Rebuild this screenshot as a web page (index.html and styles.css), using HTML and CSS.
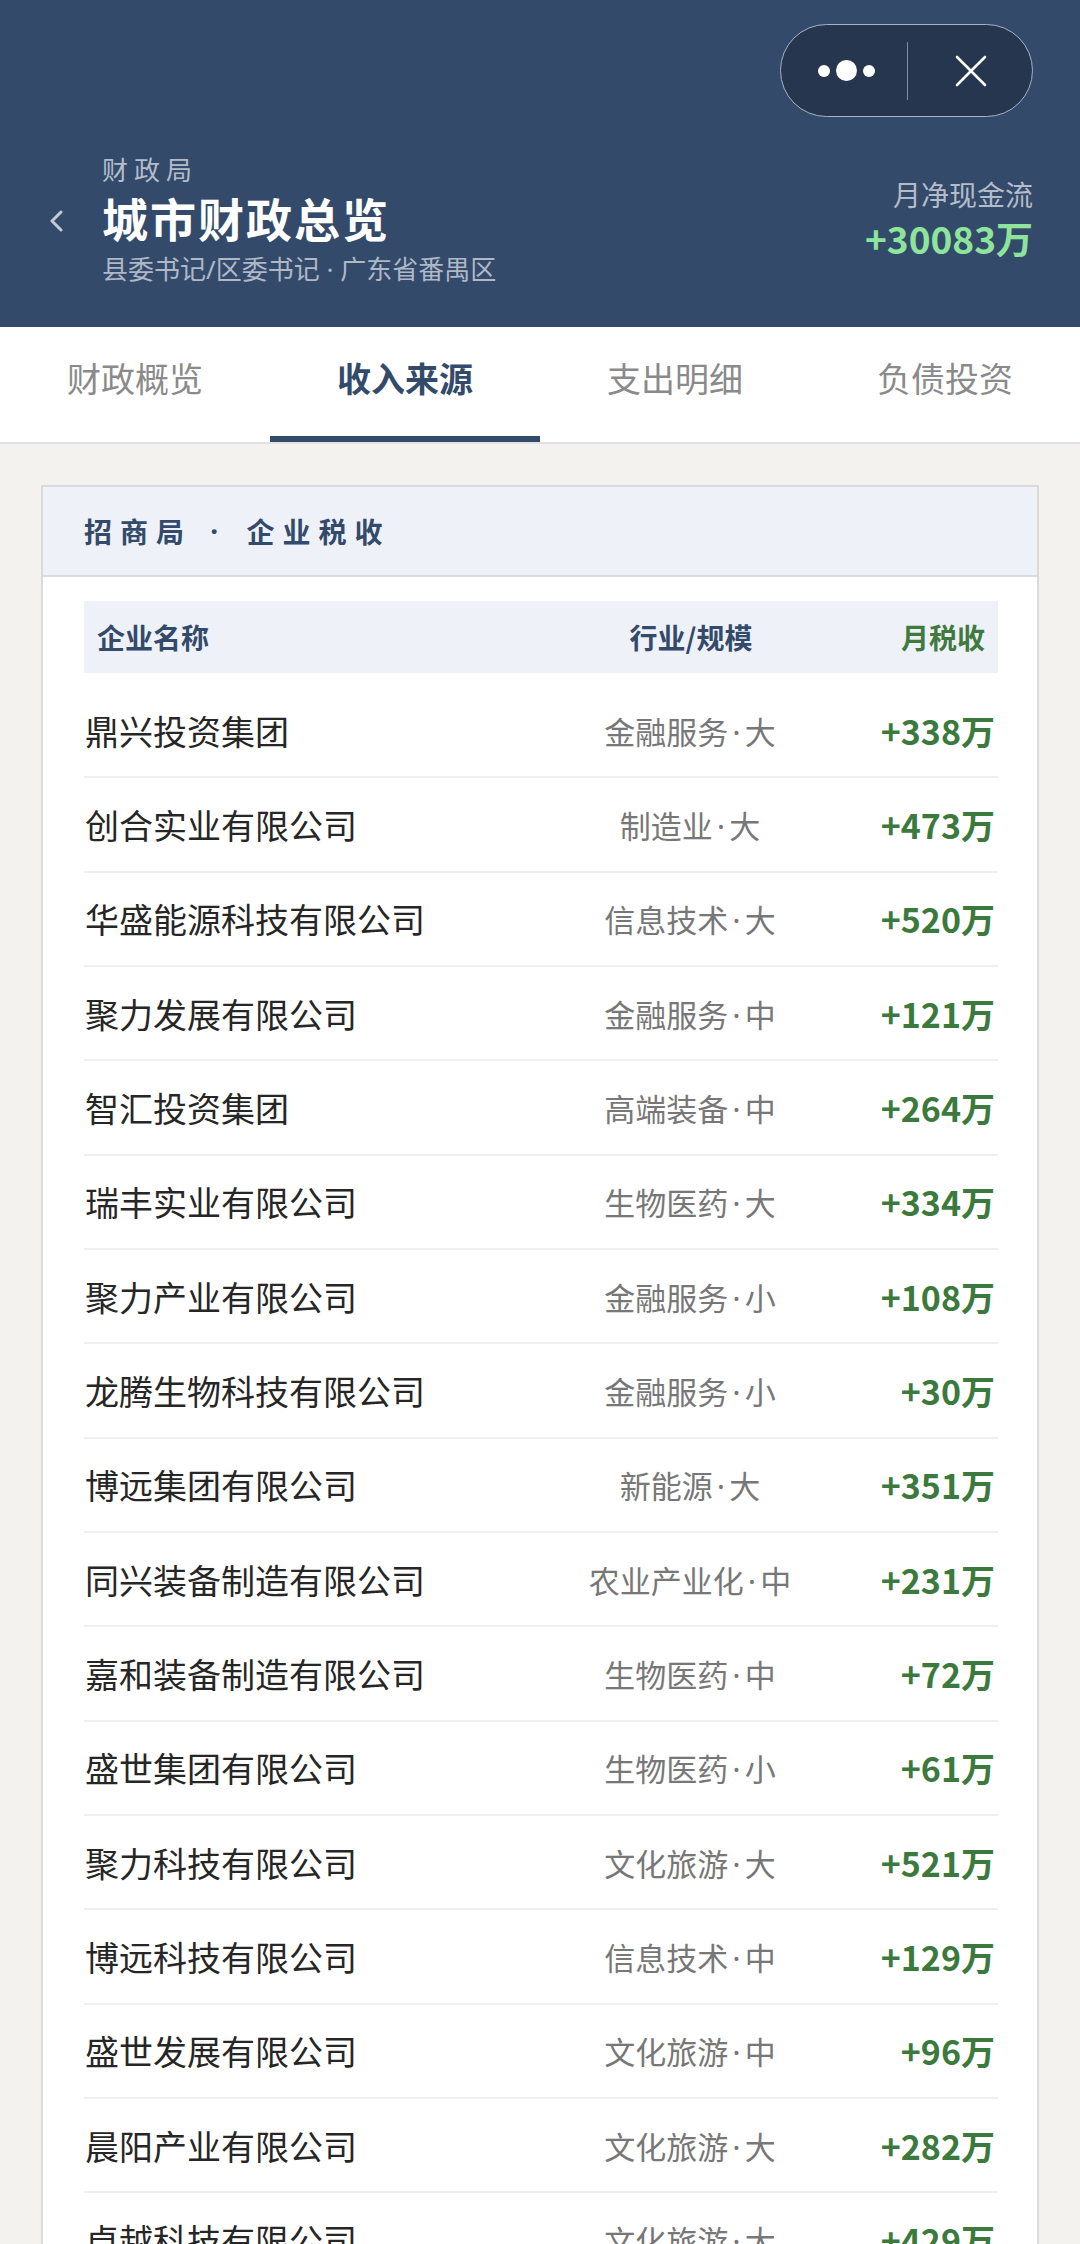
FILE: index.html
```html
<!DOCTYPE html>
<html lang="zh-CN">
<head>
<meta charset="utf-8">
<title>城市财政总览</title>
<link rel="stylesheet" href="styles.css">
</head>
<body>
<header class="top">
  <div class="capsule-row">
    <div class="capsule">
      <div class="cap-more">
        <span class="dot"></span><span class="dot big"></span><span class="dot"></span>
      </div>
      <div class="cap-divider"></div>
      <div class="cap-close">
        <svg width="34" height="34" viewBox="0 0 34 34"><path d="M3 3 L31 31 M31 3 L3 31" stroke="#ffffff" stroke-width="2.6" stroke-linecap="round" fill="none"/></svg>
      </div>
    </div>
  </div>
  <div class="info-row">
    <div class="info-left">
      <svg class="back" width="16" height="22" viewBox="0 0 16 22"><polyline points="13,2 4,11 13,20" stroke="#c3cad5" stroke-width="3" fill="none" stroke-linecap="round" stroke-linejoin="round"/></svg>
      <div class="titles">
        <div class="dept">财政局</div>
        <div class="title">城市财政总览</div>
        <div class="subtitle">县委书记/区委书记 · 广东省番禺区</div>
      </div>
    </div>
    <div class="info-right">
      <div class="cash-label">月净现金流</div>
      <div class="cash-value">+30083万</div>
    </div>
  </div>
</header>

<nav class="tabs">
  <div class="tab">财政概览</div>
  <div class="tab active">收入来源</div>
  <div class="tab">支出明细</div>
  <div class="tab">负债投资</div>
</nav>

<main class="page">
  <section class="card">
    <div class="card-head">招商局 <span class="head-sep">·</span> 企业税收</div>
    <div class="card-body">
      <div class="thead">
        <div class="th-name">企业名称</div>
        <div class="th-ind">行业/规模</div>
        <div class="th-amt">月税收</div>
      </div>
      <div class="row"><div class="c-name">鼎兴投资集团</div><div class="c-ind">金融服务<span class="sep">·</span>大</div><div class="c-amt">+338万</div></div>
      <div class="row"><div class="c-name">创合实业有限公司</div><div class="c-ind">制造业<span class="sep">·</span>大</div><div class="c-amt">+473万</div></div>
      <div class="row"><div class="c-name">华盛能源科技有限公司</div><div class="c-ind">信息技术<span class="sep">·</span>大</div><div class="c-amt">+520万</div></div>
      <div class="row"><div class="c-name">聚力发展有限公司</div><div class="c-ind">金融服务<span class="sep">·</span>中</div><div class="c-amt">+121万</div></div>
      <div class="row"><div class="c-name">智汇投资集团</div><div class="c-ind">高端装备<span class="sep">·</span>中</div><div class="c-amt">+264万</div></div>
      <div class="row"><div class="c-name">瑞丰实业有限公司</div><div class="c-ind">生物医药<span class="sep">·</span>大</div><div class="c-amt">+334万</div></div>
      <div class="row"><div class="c-name">聚力产业有限公司</div><div class="c-ind">金融服务<span class="sep">·</span>小</div><div class="c-amt">+108万</div></div>
      <div class="row"><div class="c-name">龙腾生物科技有限公司</div><div class="c-ind">金融服务<span class="sep">·</span>小</div><div class="c-amt">+30万</div></div>
      <div class="row"><div class="c-name">博远集团有限公司</div><div class="c-ind">新能源<span class="sep">·</span>大</div><div class="c-amt">+351万</div></div>
      <div class="row"><div class="c-name">同兴装备制造有限公司</div><div class="c-ind">农业产业化<span class="sep">·</span>中</div><div class="c-amt">+231万</div></div>
      <div class="row"><div class="c-name">嘉和装备制造有限公司</div><div class="c-ind">生物医药<span class="sep">·</span>中</div><div class="c-amt">+72万</div></div>
      <div class="row"><div class="c-name">盛世集团有限公司</div><div class="c-ind">生物医药<span class="sep">·</span>小</div><div class="c-amt">+61万</div></div>
      <div class="row"><div class="c-name">聚力科技有限公司</div><div class="c-ind">文化旅游<span class="sep">·</span>大</div><div class="c-amt">+521万</div></div>
      <div class="row"><div class="c-name">博远科技有限公司</div><div class="c-ind">信息技术<span class="sep">·</span>中</div><div class="c-amt">+129万</div></div>
      <div class="row"><div class="c-name">盛世发展有限公司</div><div class="c-ind">文化旅游<span class="sep">·</span>中</div><div class="c-amt">+96万</div></div>
      <div class="row"><div class="c-name">晨阳产业有限公司</div><div class="c-ind">文化旅游<span class="sep">·</span>大</div><div class="c-amt">+282万</div></div>
      <div class="row"><div class="c-name">卓越科技有限公司</div><div class="c-ind">文化旅游<span class="sep">·</span>大</div><div class="c-amt">+429万</div></div>
    </div>
  </section>
</main>
</body>
</html>
```
FILE: styles.css
```css
* { box-sizing: border-box; }
html, body {
  margin: 0;
  padding: 0;
}
body {
  background: #f3f2ef;
  font-family: "Noto Sans CJK SC", "Noto Sans", sans-serif;
  width: 1080px;
  overflow-x: hidden;
}

/* ---------- header ---------- */
.top {
  background: #344a6b;
  height: 327px;
  padding: 24px 47px 0 48px;
  display: flex;
  flex-direction: column;
}
.capsule-row {
  display: flex;
  justify-content: flex-end;
}
.capsule {
  width: 253px;
  height: 93px;
  border-radius: 47px;
  background: #26364f;
  border: 1.5px solid #a7b2c3;
  display: flex;
  align-items: center;
}
.cap-more {
  flex: 1;
  display: flex;
  align-items: center;
  justify-content: center;
  gap: 6px;
  padding-left: 4px;
}
.dot {
  width: 12px;
  height: 12px;
  border-radius: 50%;
  background: #ffffff;
}
.dot.big {
  width: 21px;
  height: 21px;
}
.cap-divider {
  width: 1px;
  height: 58px;
  background: #7f8ca1;
}
.cap-close {
  flex: 1;
  display: flex;
  align-items: center;
  justify-content: center;
  padding-left: 2px;
}
.cap-close svg { display: block; }

.info-row {
  margin-top: 35px;
  display: flex;
  justify-content: space-between;
  align-items: center;
}
.info-left {
  display: flex;
  align-items: center;
}
.back {
  display: block;
  margin-right: 38px;
  margin-top: 4px;
}
.titles {
  display: flex;
  flex-direction: column;
}
.dept {
  font-size: 26px;
  line-height: 34px;
  letter-spacing: 6px;
  color: #b3bcc9;
}
.title {
  margin-top: 4px;
  font-size: 46px;
  line-height: 54px;
  font-weight: 700;
  letter-spacing: 2px;
  color: #ffffff;
}
.subtitle {
  margin-top: 8px;
  font-family: "Noto Sans", "Noto Sans CJK SC", sans-serif;
  font-size: 26px;
  line-height: 34px;
  color: #aeb8c6;
}
.info-right {
  display: flex;
  flex-direction: column;
  align-items: flex-end;
}
.cash-label {
  font-size: 28px;
  line-height: 36px;
  color: #b3bcc9;
}
.cash-value {
  margin-top: 2px;
  font-size: 37px;
  line-height: 48px;
  font-weight: 700;
  color: #8fe49c;
}

/* ---------- tabs ---------- */
.tabs {
  display: flex;
  background: #ffffff;
  border-bottom: 2px solid #e2e2e2;
  height: 117px;
}
.tab {
  flex: 1;
  display: flex;
  align-items: center;
  justify-content: center;
  font-size: 34px;
  color: #8a8a8a;
  padding-bottom: 8px;
  border-bottom: 6px solid transparent;
}
.tab.active {
  color: #344a6b;
  font-weight: 700;
  border-bottom-color: #344a6b;
}

/* ---------- card ---------- */
.page {
  padding: 41px 41px 0 41px;
}
.card {
  background: #ffffff;
  border: 2px solid #dadada;
}
.card-head {
  height: 90px;
  background: #eef2f8;
  border-bottom: 2px solid #d8dce2;
  display: flex;
  align-items: center;
  padding-left: 41px;
  font-size: 28px;
  font-weight: 700;
  letter-spacing: 8px;
  color: #344a6b;
  white-space: pre;
}
.head-sep {
  font-family: "Noto Sans", sans-serif;
  margin: 0 6px 0 4px;
}
.card-body {
  padding: 24px 39px 0 41px;
}
.thead {
  height: 72px;
  background: #eef2f8;
  display: grid;
  grid-template-columns: 1fr 230px 179px;
  align-items: center;
  padding: 0 13px;
  margin-bottom: 11px;
  font-size: 28px;
  font-weight: 700;
  color: #344a6b;
}
.th-ind { text-align: center; }
.th-amt { text-align: right; color: #3f7a3f; }

.row {
  height: 94.33px;
  border-bottom: 2px solid #efefef;
  display: grid;
  grid-template-columns: 1fr 230px 190px;
  align-items: center;
  padding: 0 3px 0 1px;
}
.c-name {
  font-size: 34px;
  color: #262626;
  white-space: nowrap;
}
.c-ind {
  text-align: center;
  font-size: 31px;
  color: #777777;
  white-space: nowrap;
}
.sep {
  font-family: "Noto Sans", sans-serif;
  padding: 0 4px;
}
.c-amt {
  text-align: right;
  font-size: 34px;
  font-weight: 700;
  color: #3b7a3c;
}
```
